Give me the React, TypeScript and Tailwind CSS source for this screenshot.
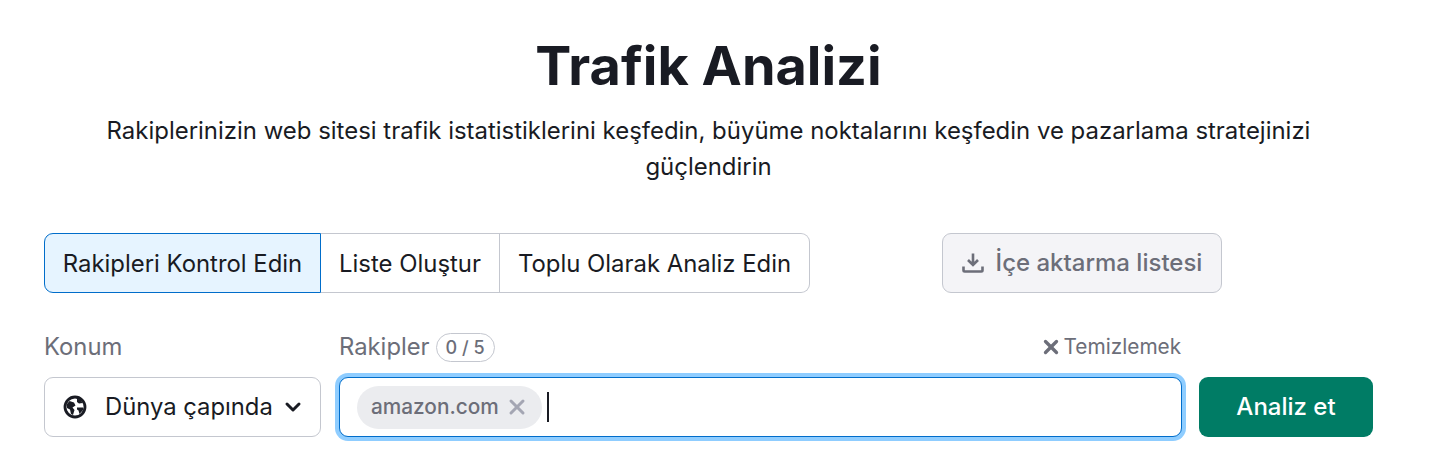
import { ChevronDown, X } from "lucide-react";

function GlobeIcon() {
  return (
    <svg width="24" height="24" viewBox="0 0 24 24" fill="none" className="shrink-0">
      <circle cx="12" cy="12" r="10" stroke="#191b23" strokeWidth="2.8" />
      <path d="M3.5 9.5 6.5 6l4.5 1.5 1.5 3-3 2L11.5 15 10 20l-2-1-1-4.5-3-1.5z" fill="#191b23" />
      <path d="M14 3.5 18 5l1.5 3-3.5.5-2-1.5z" fill="#191b23" />
      <path d="M14 12.5h6l.5 2-4 4.5-1-3.5-1.5-1z" fill="#191b23" />
    </svg>
  );
}

function ImportIcon() {
  return (
    <svg width="22" height="22" viewBox="0 0 22 22" fill="none" className="shrink-0">
      <path d="M11 1.5v10.5M6 8l5 5 5-5" stroke="#6c6e79" strokeWidth="2.6" />
      <path d="M1.5 14.5v3.8c0 .7.5 1.2 1.2 1.2h16.6c.7 0 1.2-.5 1.2-1.2v-3.8" stroke="#6c6e79" strokeWidth="2.6" />
    </svg>
  );
}

export default function App() {
  return (
    <div className="min-h-[453px] bg-white font-['Inter',sans-serif] text-[#191b23]">
      <div className="ml-[44px] flex w-[1329px] flex-col pt-[32px]">
        <h1 className="text-center text-[54px] leading-[68px] font-bold">Trafik Analizi</h1>
        <p className="mx-auto mt-[13px] w-[1240px] text-center text-[23.95px] leading-[36px]">
          Rakiplerinizin web sitesi trafik istatistiklerini keşfedin, büyüme noktalarını keşfedin ve pazarlama stratejinizi güçlendirin
        </p>

        <div className="mt-[48px] flex h-[60px] items-stretch">
          <button className="w-[277px] rounded-l-[9px] border border-[#006dca] bg-[#e6f4ff] pt-[2px] text-[23.9px]">
            Rakipleri Kontrol Edin
          </button>
          <button className="w-[179px] border-y border-r border-[#c4c7cf] pt-[2px] text-[23.9px]">Liste Oluştur</button>
          <button className="w-[310px] rounded-r-[9px] border-y border-r border-[#c4c7cf] pt-[2px] text-[23.9px]">
            Toplu Olarak Analiz Edin
          </button>
          <button className="ml-[132px] flex w-[280px] items-center justify-center gap-[12px] rounded-[9px] border border-[#c4c7cf] bg-[#f4f4f7] text-[24px] font-medium text-[#6c6e79]">
            <ImportIcon />
            İçe aktarma listesi
          </button>
        </div>

        <div className="mt-[36px] flex h-[36px] items-center text-[23.8px] text-[#6c6e79]">
          <span className="w-[295px]">Konum</span>
          <span>Rakipler</span>
          <span className="ml-[6px] flex h-[29px] w-[59px] items-center justify-center rounded-full border border-[#c4c7cf] text-[18px] font-medium">
            0 / 5
          </span>
          <span className="ml-[545px] flex items-center gap-[2px] text-[20.8px]">
            <X size={22} strokeWidth={3.6} />
            Temizlemek
          </span>
        </div>

        <div className="mt-[12px] flex h-[60px] items-stretch">
          <button className="flex w-[277px] items-center rounded-[9px] border border-[#c4c7cf] bg-white pl-[18px] text-[23.8px]">
            <GlobeIcon />
            <span className="ml-[18px]">Dünya çapında</span>
            <ChevronDown size={24} strokeWidth={3} className="ml-[8px]" />
          </button>
          <div className="ml-[18px] flex w-[843px] items-center rounded-[9px] border border-[#006dca] bg-white pl-[17px] shadow-[0_0_0_4px_#8fcdff]">
            <span className="flex h-[43px] items-center gap-[6px] rounded-full bg-[#ebecef] pr-[13px] pl-[14px] text-[20.8px] font-medium text-[#6c6e79]">
              amazon.com
              <X size={24} strokeWidth={3} className="text-[#a4a6b3]" />
            </span>
            <span className="ml-[5px] h-[30px] w-[2px] bg-[#191b23]" />
          </div>
          <button className="ml-[17px] w-[174px] rounded-[9px] bg-[#007c65] text-[24px] font-medium text-white">
            Analiz et
          </button>
        </div>
      </div>
    </div>
  );
}
